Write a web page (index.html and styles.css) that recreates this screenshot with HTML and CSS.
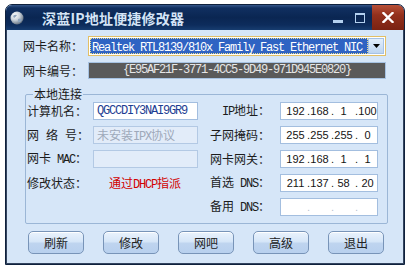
FILE: index.html
```html
<!DOCTYPE html>
<html>
<head>
<meta charset="utf-8">
<link rel="stylesheet" href="styles.css">
</head>
<body>
<div class="window">
  <div class="titlebar">
    <svg class="appicon" width="14" height="14" viewBox="0 0 14 14">
      <defs>
        <radialGradient id="g" cx="0.35" cy="0.3" r="0.75">
          <stop offset="0" stop-color="#ffffff"/>
          <stop offset="0.5" stop-color="#c8d0d8"/>
          <stop offset="1" stop-color="#5c6a7a"/>
        </radialGradient>
      </defs>
      <circle cx="7" cy="7" r="6.5" fill="url(#g)"/>
      <path d="M3 5 Q5 3 7 4 Q6 6 4 7 Z" fill="#8fa4bc"/>
      <path d="M8 8 Q11 7 12 9 Q10 12 8 11 Z" fill="#8fa4bc"/>
    </svg>
    <span class="title">深蓝IP地址便捷修改器</span>
    <span class="ctl-min"></span>
    <span class="ctl-max"></span>
    <span class="ctl-close">
      <svg width="12" height="11" viewBox="0 0 12 11"><path d="M1.5 1 L10.5 10 M10.5 1 L1.5 10" stroke="#fff" stroke-width="2.4" stroke-linecap="square"/></svg>
    </span>
  </div>
  <div class="client">
    <div class="row first">
      <span class="label">网卡名称：</span>
      <div class="combo">
        <div class="combo-sel"><span class="mono">Realtek RTL8139/810x Family Fast Ethernet NIC</span></div>
        <div class="combo-btn"><svg width="7" height="4" viewBox="0 0 7 4"><path d="M0 0 H7 L3.5 4 Z" fill="#000"/></svg></div>
      </div>
    </div>
    <div class="row second">
      <span class="label">网卡编号：</span>
      <div class="guid mono">{E95AF21F-3771-4CC5-9D49-971D945E0820}</div>
    </div>
    <div class="group">
      <span class="legend">本地连接</span>
      <div class="grid">
        <span class="label">计算机名：</span>
        <div class="field"><span class="mono name">QGCCDIY3NAI9GR9</span></div>
        <span class="label r"><span class="mono">IP</span>地址：</span>
        <div class="field ip"><span class="seg">192</span><span class="dot">.</span><span class="seg">168</span><span class="dot">.</span><span class="seg">1</span><span class="dot">.</span><span class="seg">100</span></div>

        <span class="label">网<span class="sp"></span>络<span class="sp"></span>号：</span>
        <div class="field dis"><span class="gray">未安装<span class="mono">IPX</span>协议</span></div>
        <span class="label r">子网掩码：</span>
        <div class="field ip"><span class="seg">255</span><span class="dot">.</span><span class="seg">255</span><span class="dot">.</span><span class="seg">255</span><span class="dot">.</span><span class="seg">0</span></div>

        <span class="label">网卡<span class="sp2"></span><span class="mono">MAC</span>：</span>
        <div class="field dis"></div>
        <span class="label r">网卡网关：</span>
        <div class="field ip"><span class="seg">192</span><span class="dot">.</span><span class="seg">168</span><span class="dot">.</span><span class="seg">1</span><span class="dot">.</span><span class="seg">1</span></div>

        <span class="label">修改状态：</span>
        <span class="status">通过<span class="mono">DHCP</span>指派</span>
        <span class="label r">首选<span class="sp2"></span><span class="mono">DNS</span>：</span>
        <div class="field ip"><span class="seg">211</span><span class="dot">.</span><span class="seg">137</span><span class="dot">.</span><span class="seg">58</span><span class="dot">.</span><span class="seg">20</span></div>

        <span></span>
        <span></span>
        <span class="label r">备用<span class="sp2"></span><span class="mono">DNS</span>：</span>
        <div class="field ip empty"><span class="seg"></span><span class="dot">.</span><span class="seg"></span><span class="dot">.</span><span class="seg"></span><span class="dot">.</span><span class="seg"></span></div>
      </div>
    </div>
    <div class="buttons">
      <button class="btn">刷新</button>
      <button class="btn">修改</button>
      <button class="btn">网吧</button>
      <button class="btn">高级</button>
      <button class="btn">退出</button>
    </div>
  </div>
</div>
</body>
</html>
```

FILE: styles.css
```css
* { box-sizing: border-box; }
html, body { margin: 0; background: #ffffff; }
body {
  padding: 4px 0 0 5px;
  font-family: "Noto Sans CJK SC", "Noto Sans", sans-serif;
  font-size: 12px;
  color: #1a1a1a;
}
.window {
  width: 400px;
  height: 261px;
  border: 1px solid #0f213d;
  border-radius: 7px 7px 0 0;
  overflow: hidden;
  display: flex;
  flex-direction: column;
  background: #d6e6f8;
}
.titlebar {
  height: 25px;
  flex: none;
  display: flex;
  align-items: center;
  background: linear-gradient(#35578a 0, #102f60 3px, #0a2652 50%, #0d2c5c 80%, #173d70 100%);
  padding-left: 4px;
}
.appicon { flex: none; }
.title {
  margin-left: 18px;
  font-weight: 700;
  font-size: 14px;
  line-height: 16px;
  color: #d4e4f6;
  letter-spacing: 0.2px;
  flex: 1;
}
.ctl-min {
  width: 10px; height: 3px;
  background: #b3d0ef;
  margin-top: 8px;
  margin-right: 12px;
}
.ctl-max {
  width: 10px; height: 10px;
  border: 1px solid #b3d0ef;
  border-top-width: 2px;
  margin-right: 7px;
}
.ctl-close {
  width: 32px; height: 25px;
  background: linear-gradient(#b85038 0, #93301c 40%, #7a2212 100%);
  display: flex;
  align-items: center;
  justify-content: center;
  border-top-right-radius: 6px;
}
.client {
  flex: 1;
  border: 1px solid #34455f;
  border-top: none;
  padding: 6px 17px 0 16px;
  display: flex;
  flex-direction: column;
}
.row { display: flex; align-items: center; }
.row .label { width: 65px; flex: none; }
.label { white-space: nowrap; line-height: 14px; color: #1c1c1c; }
.mono {
  font-family: "Liberation Mono", monospace;
  font-size: 12px;
  letter-spacing: -1.2px;
}
.sp { display: inline-block; width: 7px; }
.sp2 { display: inline-block; width: 6px; }
.combo {
  flex: 1;
  height: 20px;
  border: 1px solid #e2bf66;
  background: #fff;
  padding: 1px;
  display: flex;
}
.combo-sel {
  flex: 1;
  background: #2f63c3;
  outline: 1px dotted #e8dc90;
  outline-offset: -1px;
  color: #ffffff;
  padding-left: 2px;
  line-height: 16px;
  white-space: nowrap;
  overflow: hidden;
}
.combo-btn {
  width: 16px;
  flex: none;
  background: linear-gradient(#e2eefb, #bdd5f1);
  border: 1px solid #a6c2e4;
  display: flex;
  align-items: center;
  justify-content: center;
}
.second { margin-top: 6px; }
.guid {
  flex: 1;
  height: 17px;
  background: #5a5a5a;
  border: 1px solid #a6c2e2;
  color: #e6e6e6;
  text-align: center;
  line-height: 15px;
}
.group {
  position: relative;
  margin: 15px 0 0 2px;
  width: 363px;
  border: 1px solid #9bb6d6;
  border-radius: 2px;
  padding: 7px 9px 7px 1px;
}
.legend {
  position: absolute;
  top: -8px;
  left: 7px;
  padding: 0 1px;
  background: #d6e6f8;
  line-height: 14px;
}
.grid {
  display: grid;
  grid-template-columns: 66px 105px 1fr 98px;
  grid-auto-rows: 18px;
  row-gap: 6px;
  align-items: center;
}
.grid .label.r { justify-self: end; margin-right: 10px; }
.field {
  height: 18px;
  background: #ffffff;
  border: 1px solid #a3bedf;
  display: flex;
  align-items: center;
  overflow: hidden;
}
.field.dis { background: #e2ecf9; border-color: #b3c9e4; }
.name { color: #1d3d92; padding-left: 3px; }
.gray { color: #9ea9ba; padding-left: 3px; white-space: nowrap; }
.status {
  color: #d20000;
  padding-left: 16px;
  white-space: nowrap;
}
.ip {
  padding-left: 5px;
  font-family: "Liberation Sans", sans-serif;
  font-size: 11px;
  color: #141414;
}
.seg { width: 19px; flex: none; text-align: center; }
.dot { width: 5px; flex: none; text-align: right; }
.empty .dot { color: #b9c3cf; }
.buttons {
  display: flex;
  gap: 19px;
  margin: 7px 0 0 5px;
}
.btn {
  width: 56px;
  height: 23px;
  padding: 0;
  border: 1px solid #7894b8;
  border-radius: 5px;
  background: linear-gradient(#eaf3fd 0, #d6e6f8 45%, #bed4ef 55%, #b8d0ee 100%);
  font-family: "Noto Sans CJK SC", sans-serif;
  font-size: 12px;
  color: #222;
  box-shadow: inset 0 1px 0 #ffffff;
}
```
